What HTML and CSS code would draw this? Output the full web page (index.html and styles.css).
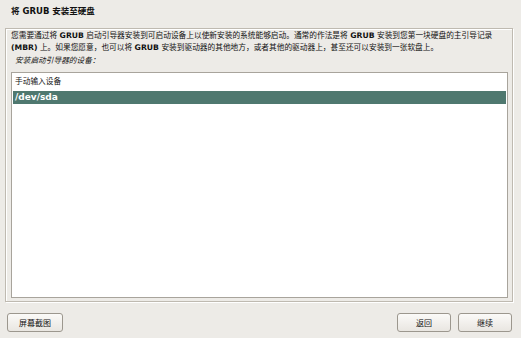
FILE: index.html
```html
<!DOCTYPE html>
<html lang="zh-CN">
<head>
<meta charset="utf-8">
<title>将 GRUB 安装至硬盘</title>
<link rel="stylesheet" href="styles.css">
</head>
<body>
<div class="window">
  <h1 class="title">将 GRUB 安装至硬盘</h1>
  <div class="panel">
    <p class="desc">您需要通过将 <b>GRUB</b> 启动引导器安装到可启动设备上以使新安装的系统能够启动。通常的作法是将 <b>GRUB</b> 安装到您第一块硬盘的主引导记录 <b>(MBR)</b> 上。如果您愿意，也可以将 <b>GRUB</b> 安装到驱动器的其他地方，或者其他的驱动器上，甚至还可以安装到一张软盘上。</p>
    <p class="label">安装启动引导器的设备：</p>
    <ul class="list">
      <li class="item first">手动输入设备</li>
      <li class="item selected">/dev/sda</li>
    </ul>
  </div>
  <div class="footer">
    <button class="btn btn-shot">屏幕截图</button>
    <div class="spacer"></div>
    <button class="btn">返回</button>
    <button class="btn">继续</button>
  </div>
</div>
</body>
</html>
```
FILE: styles.css
```css
html, body {
  margin: 0;
  padding: 0;
  background: #edebe7;
}
body {
  width: 521px;
  height: 338px;
  overflow: hidden;
  font-family: "DejaVu Sans", "Noto Sans CJK SC", sans-serif;
  font-size: 7.7px;
  color: #111111;
}
.window {
  display: flex;
  flex-direction: column;
  height: 338px;
}
.title {
  margin: 0;
  padding: 5px 0 0 11px;
  height: 28px;
  flex: none;
  box-sizing: border-box;
  font-size: 8.5px;
  font-weight: bold;
  line-height: 12px;
}
.panel {
  margin: 0 8px 0 5px;
  height: 274px;
  flex: none;
  box-sizing: border-box;
  border: 1px solid #bfbab1;
  box-shadow: inset 1px 1px 0 #ffffff, 1px 1px 0 #ffffff;
  padding: 1px 4px 3px 5px;
  display: flex;
  flex-direction: column;
}
.desc {
  margin: 0;
  line-height: 11.5px;
}
.desc b {
  font-weight: bold;
}
.label {
  margin: 1px 0 0 4px;
  font-style: italic;
  line-height: 14px;
  height: 18px;
}
.list {
  list-style: none;
  margin: 0;
  padding: 2px 1px;
  flex: 1;
  background: #ffffff;
  border: 1px solid #a8a49c;
}
.item {
  height: 13px;
  line-height: 13px;
  padding-left: 2px;
}
.first {
  height: 16px;
  line-height: 14px;
}
.selected {
  background: #4f786f;
  color: #ffffff;
  font-weight: bold;
  font-size: 9px;
}
.footer {
  display: flex;
  align-items: center;
  padding: 11px 9px 0 7px;
  gap: 7px;
}
.spacer {
  flex: 1;
}
.btn {
  width: 54px;
  height: 19px;
  margin: 0;
  padding: 0;
  border: 1px solid #9c978e;
  border-radius: 3px;
  background: linear-gradient(#fbfaf8, #e9e6e1);
  font-family: "DejaVu Sans", "Noto Sans CJK SC", sans-serif;
  font-size: 8px;
  color: #111111;
}
.btn-shot {
  width: 56px;
}
```
